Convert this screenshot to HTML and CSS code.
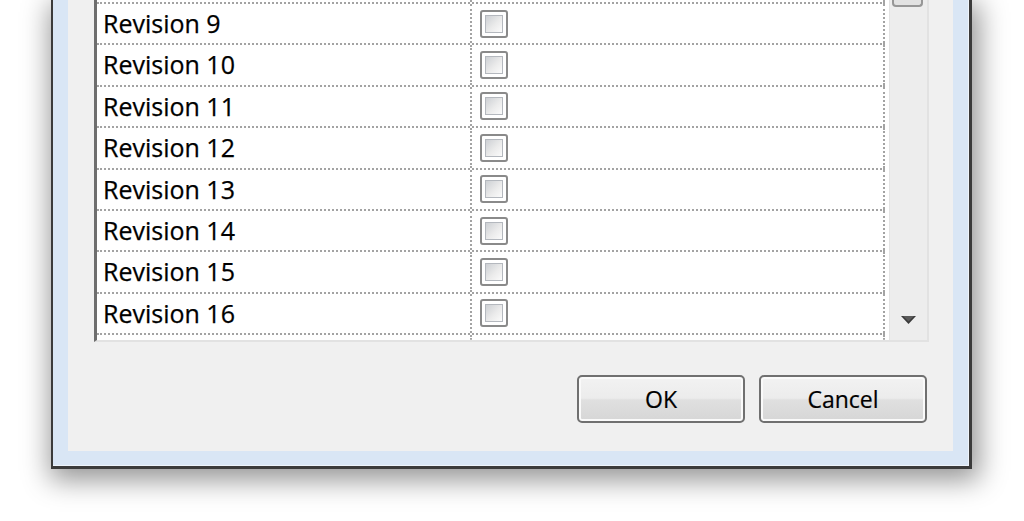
FILE: index.html
```html
<!DOCTYPE html>
<html>
<head>
<meta charset="utf-8">
<title>Revisions</title>
<link rel="stylesheet" href="styles.css">
</head>
<body>
<div class="window">
  <div class="content">
    <div class="listview">
      <div class="rows">
        <div class="row first"><div class="c1"></div><div class="c2"><span class="cb"><span class="cb-in"></span></span></div></div>
        <div class="row"><div class="c1">Revision 9</div><div class="c2"><span class="cb"><span class="cb-in"></span></span></div></div>
        <div class="row"><div class="c1">Revision 10</div><div class="c2"><span class="cb"><span class="cb-in"></span></span></div></div>
        <div class="row"><div class="c1">Revision 11</div><div class="c2"><span class="cb"><span class="cb-in"></span></span></div></div>
        <div class="row"><div class="c1">Revision 12</div><div class="c2"><span class="cb"><span class="cb-in"></span></span></div></div>
        <div class="row"><div class="c1">Revision 13</div><div class="c2"><span class="cb"><span class="cb-in"></span></span></div></div>
        <div class="row"><div class="c1">Revision 14</div><div class="c2"><span class="cb"><span class="cb-in"></span></span></div></div>
        <div class="row"><div class="c1">Revision 15</div><div class="c2"><span class="cb"><span class="cb-in"></span></span></div></div>
        <div class="row"><div class="c1">Revision 16</div><div class="c2"><span class="cb"><span class="cb-in"></span></span></div></div>
        <div class="row filler"><div class="c1"></div><div class="c2"></div></div>
      </div>
      <div class="scrollbar">
        <div class="thumb"></div>
        <div class="track"></div>
        <div class="arrow">
          <svg width="15" height="8" viewBox="0 0 15 8"><polygon points="0,0 15,0 7.5,8" fill="#3a3a3a"/><polygon points="2,0 13,0 7.5,5.5" fill="#5a5a5a"/></svg>
        </div>
      </div>
    </div>
    <div class="buttons">
      <button class="btn">OK</button>
      <button class="btn">Cancel</button>
    </div>
  </div>
</div>
</body>
</html>
```

FILE: styles.css
```css
html, body {
  margin: 0;
  background: #fff;
}
body {
  font-family: "Open Sans", "Noto Sans", sans-serif;
  height: 521px;
  overflow: hidden;
}
.window {
  box-sizing: border-box;
  width: 921px;
  margin-left: 51px;
  border-style: solid;
  border-color: #3b3b3b;
  border-width: 0 3px 3px 2px;
  padding: 0 16px 15px 15px;
  background: #d9e6f5;
  box-shadow: inset -1px -1px 0 #eef4fb, 3px 7px 26px 4px rgba(0, 0, 0, 0.42);
}
.content {
  background: #f0f0f0;
  padding: 0 24px 28px 26px;
}
.listview {
  box-sizing: border-box;
  height: 342px;
  display: flex;
  background: #fff;
  border-left: 3px solid #6e6e6e;
  border-right: 2px solid #e2e2e2;
  border-bottom: 2px solid #e2e2e2;
}
.rows {
  flex: 1;
  display: flex;
  flex-direction: column;
}
.row {
  flex: none;
  display: flex;
  width: 788px;
  height: 41.4px;
  box-sizing: border-box;
  border-bottom: 2px dotted #a3a3a3;
}
.row.first {
  margin-top: -37.4px;
}
.row.filler {
  flex: 1;
  border-bottom: 0;
}
.c1 {
  width: 375px;
  box-sizing: border-box;
  border-right: 2px dotted #a3a3a3;
  padding-left: 6px;
  font-size: 25px;
  line-height: 38px;
  color: #000;
  white-space: nowrap;
  -webkit-text-stroke: 0.25px #000;
}
.c2 {
  width: 413px;
  box-sizing: border-box;
  border-right: 2px dotted #a3a3a3;
  padding-left: 8px;
  display: flex;
  align-items: center;
}
.cb {
  display: block;
  width: 28px;
  height: 28px;
  box-sizing: border-box;
  border: 2px solid #8a8a8a;
  border-radius: 3px;
  background: #fff;
  padding: 3px;
}
.cb-in {
  display: block;
  height: 100%;
  box-sizing: border-box;
  border: 1px solid #b4b8be;
  background: linear-gradient(135deg, #cdd0d4 0%, #ebebeb 55%, #fbfbfb 100%);
}
.scrollbar {
  width: 38px;
  display: flex;
  flex-direction: column;
  background: #ededed;
  border-left: 1px solid #e3e3e3;
  box-sizing: border-box;
}
.thumb {
  height: 5px;
  margin: 0 4px 0 2px;
  border: 2px solid #979797;
  border-top: 0;
  border-radius: 0 0 4px 4px;
  background: #e2e2e2;
}
.track {
  flex: 1;
}
.arrow {
  height: 40px;
  display: flex;
  align-items: center;
  justify-content: center;
}
.buttons {
  display: flex;
  justify-content: flex-end;
  gap: 14px;
  margin-top: 33px;
  padding-right: 2px;
}
.btn {
  width: 168px;
  height: 48px;
  padding: 0;
  border: 2px solid #707070;
  border-radius: 5px;
  background: linear-gradient(#f2f2f2 0%, #ececec 48%, #e0e0e0 52%, #d6d6d6 100%);
  box-shadow: inset 0 0 0 2px #fafafa;
  font-family: inherit;
  font-size: 23px;
  color: #000;
  -webkit-text-stroke: 0.2px #000;
}
```
